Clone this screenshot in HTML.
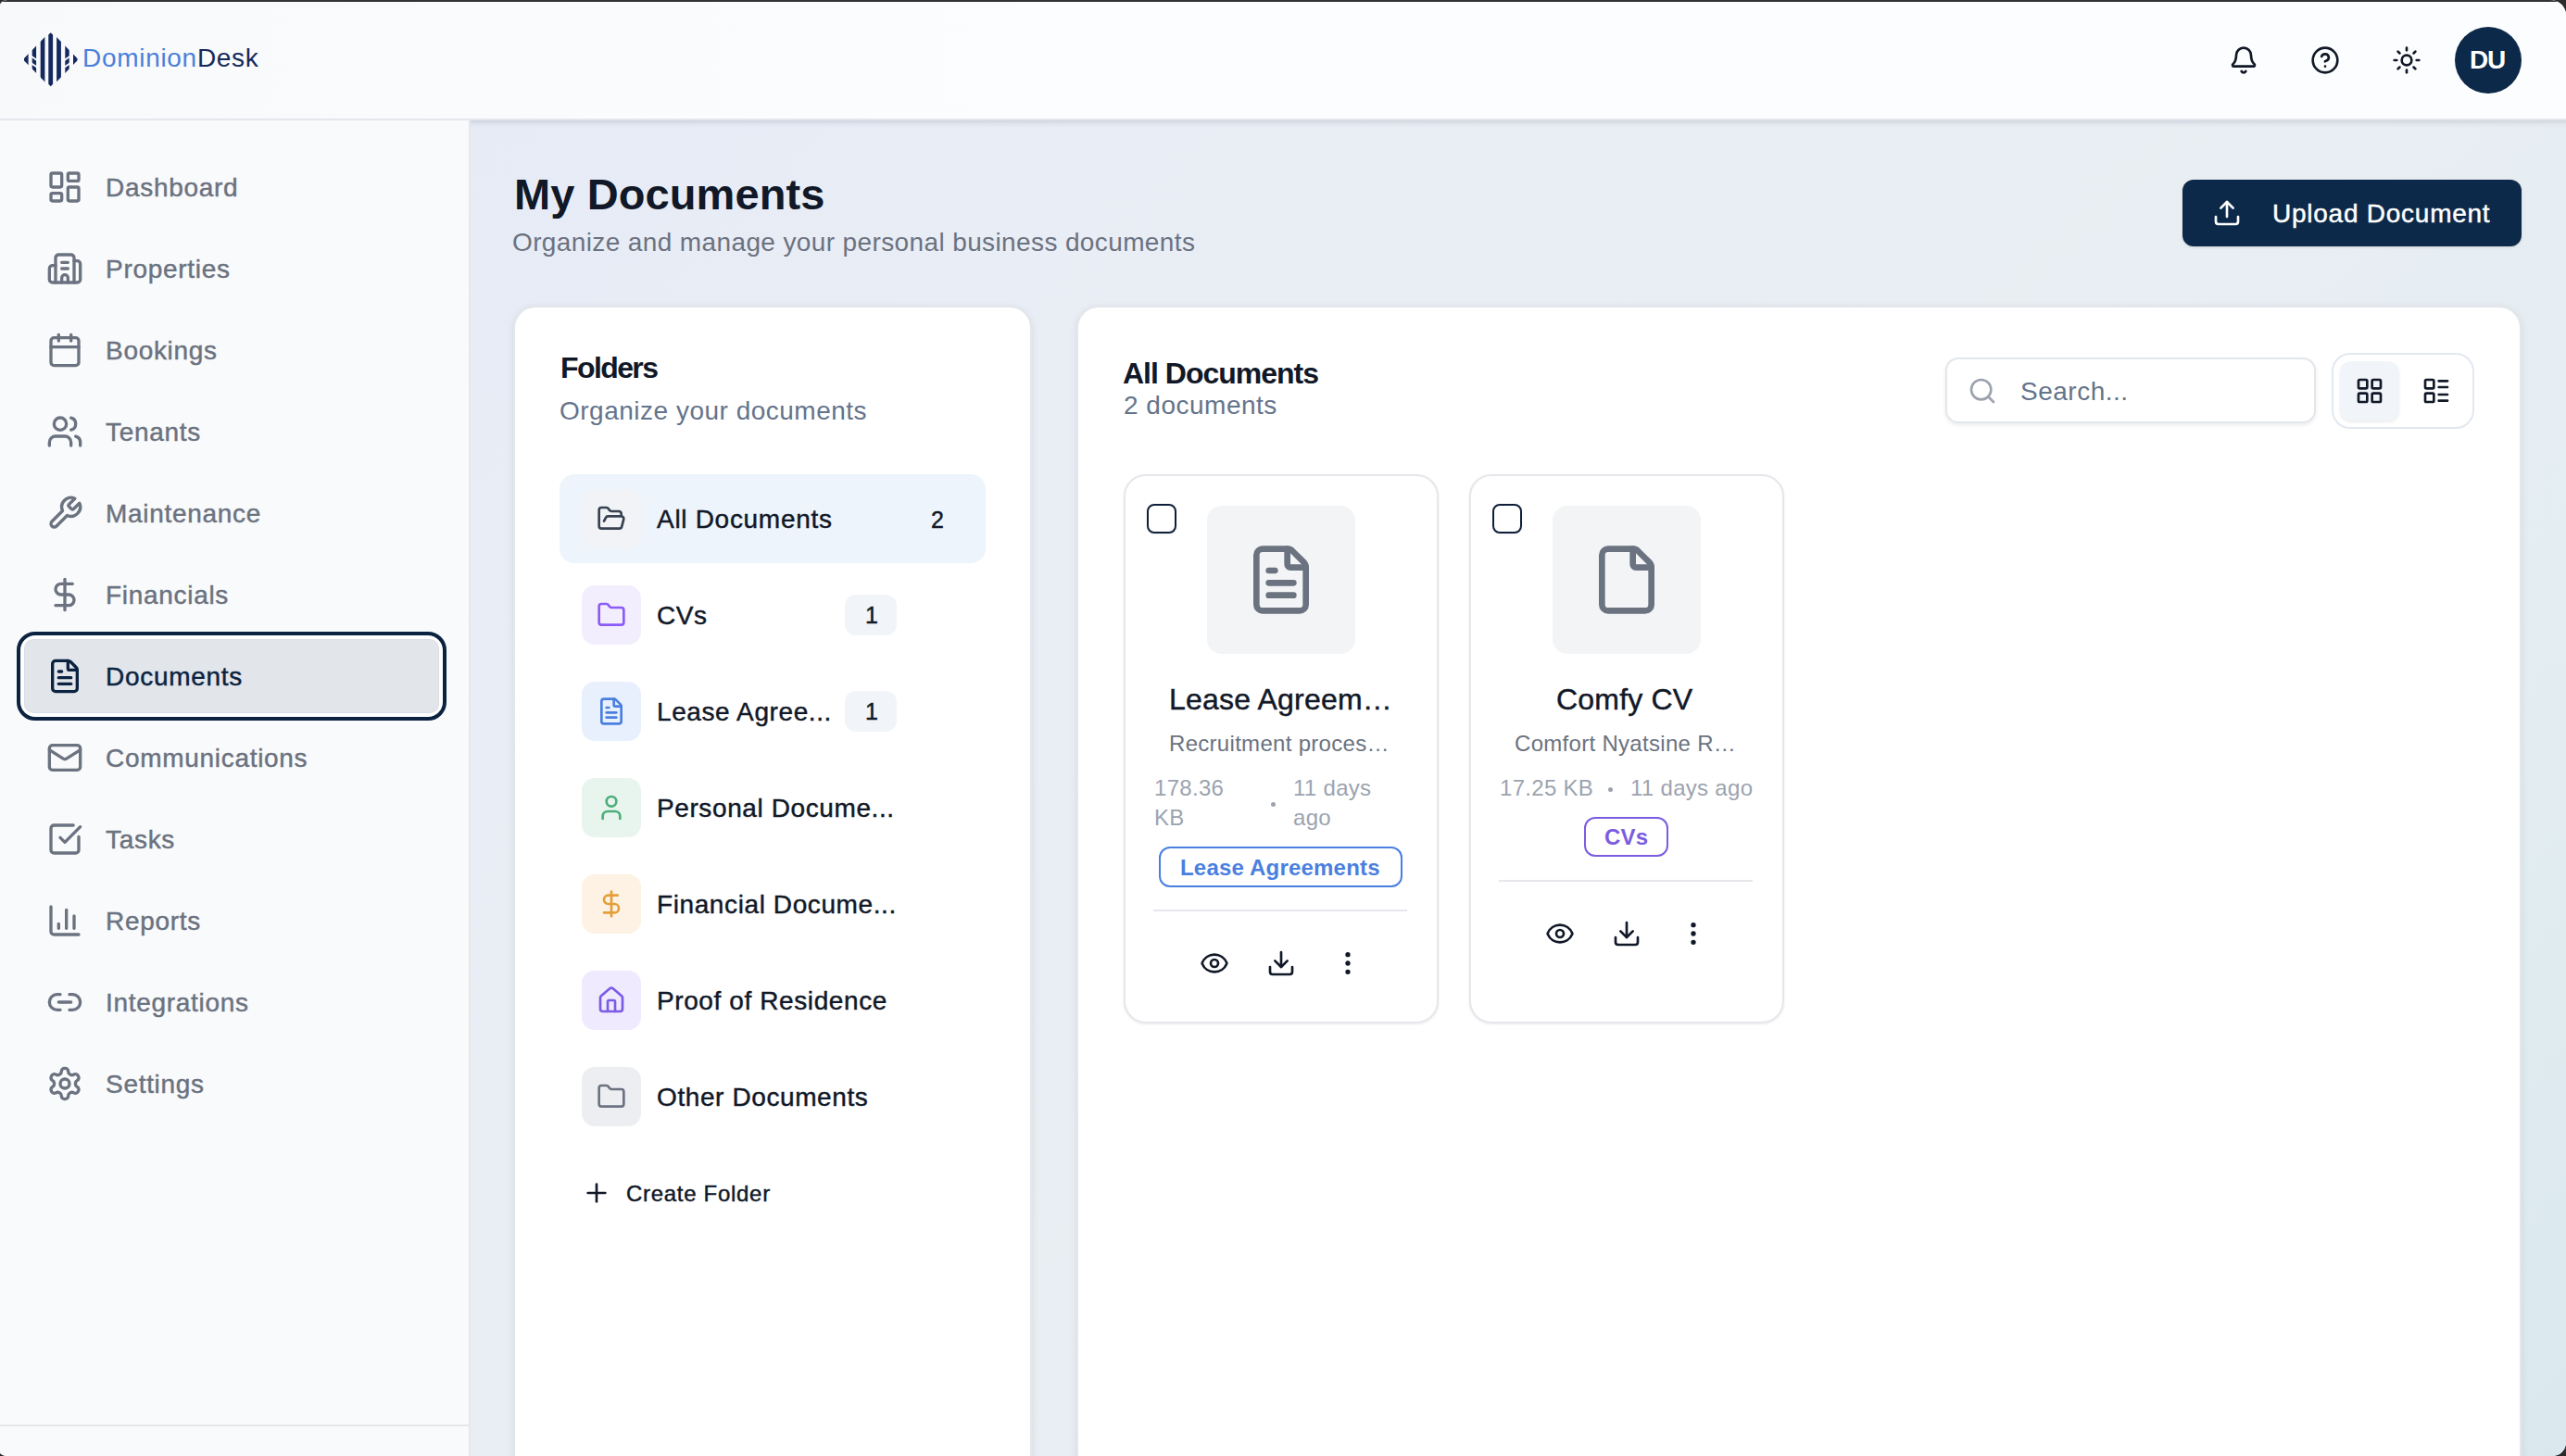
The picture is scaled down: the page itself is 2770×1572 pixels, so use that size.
<!DOCTYPE html>
<html><head><meta charset="utf-8">
<style>
*{box-sizing:border-box;margin:0;padding:0}
html,body{width:2770px;height:1572px;overflow:hidden;background:#2c2c2c;font-family:"Liberation Sans",sans-serif}
.app{position:absolute;left:0;top:0;width:2770px;height:1572px;border-radius:8px 17px 14px 8px / 6px 16px 15px 4px;overflow:hidden;background:#f9fafb}
.ab{position:absolute;display:block}
.t{position:absolute;white-space:nowrap}
</style></head><body><div class="app">
<div class="ab" style="left:0px;top:0px;width:2770px;height:130px;background:linear-gradient(90deg,#f8f9fb 0%,#fafbfc 20%,#fcfdfe 40%,#fcfdfe 100%);border-bottom:2px solid #e3e6eb"></div>
<svg class="ab" style="left:0;top:0" width="100" height="128" viewBox="0 0 100 128">
<defs><clipPath id="dm"><polygon points="54.7,33.6 24.8,64.2 54.7,94.8 84.6,64.2"/></clipPath></defs>
<g clip-path="url(#dm)" fill="#15295e">
<rect x="26" y="30" width="4.6" height="70"/>
<rect x="34.7" y="30" width="4.4" height="70"/>
<rect x="43.7" y="30" width="4.7" height="70"/>
<polygon points="52.3,37.6 54.7,35.2 57.1,37.6 57.1,90.8 54.7,93.2 52.3,90.8"/>
<rect x="61.1" y="30" width="4.8" height="70"/>
<rect x="70.3" y="30" width="4.4" height="70"/>
<rect x="79" y="30" width="4.6" height="70"/>
</g>
<g stroke="#fcfcfd" stroke-width="1.9">
<line x1="33" y1="60.2" x2="41" y2="65.8"/><line x1="33" y1="67.7" x2="41" y2="73.3"/>
<line x1="76.4" y1="60.2" x2="68.4" y2="65.8"/><line x1="76.4" y1="67.7" x2="68.4" y2="73.3"/>
</g></svg>
<div class="t" style="left:89px;top:49.30px;font-size:28px;line-height:28px;color:#4b80da;letter-spacing:0.7px;"><span style="color:#4b80da">Dominion</span><span style="color:#15295a">Desk</span></div>
<svg class="ab" style="left:2406px;top:49px" width="32" height="32" viewBox="0 0 24 24" fill="none" stroke="#111827" stroke-width="2" stroke-linecap="round" stroke-linejoin="round"><path d="M10.268 21a2 2 0 0 0 3.464 0"/><path d="M3.262 15.326A1 1 0 0 0 4 17h16a1 1 0 0 0 .74-1.673C19.41 13.956 18 12.499 18 8A6 6 0 0 0 6 8c0 4.499-1.411 5.956-2.738 7.326"/></svg>
<svg class="ab" style="left:2494px;top:49px" width="32" height="32" viewBox="0 0 24 24" fill="none" stroke="#111827" stroke-width="2" stroke-linecap="round" stroke-linejoin="round"><circle cx="12" cy="12" r="10"/><path d="M9.09 9a3 3 0 0 1 5.83 1c0 2-3 3-3 3"/><path d="M12 17h.01"/></svg>
<svg class="ab" style="left:2582px;top:49px" width="32" height="32" viewBox="0 0 24 24" fill="none" stroke="#111827" stroke-width="2" stroke-linecap="round" stroke-linejoin="round"><circle cx="12" cy="12" r="4"/><path d="M12 2v2"/><path d="M12 20v2"/><path d="m4.93 4.93 1.41 1.41"/><path d="m17.66 17.66 1.41 1.41"/><path d="M2 12h2"/><path d="M20 12h2"/><path d="m6.34 17.66-1.41 1.41"/><path d="m19.07 4.93-1.41 1.41"/></svg>
<div class="ab" style="left:2650px;top:29px;width:72px;height:72px;border-radius:50%;background:#0d2949"></div>
<div class="t" style="left:2666px;top:50.80px;font-size:28px;line-height:28px;color:#fff;font-weight:700;letter-spacing:-1.2px;">DU</div>
<div class="ab" style="left:0px;top:130px;width:508px;height:1442px;background:#f9fafb;border-right:2px solid #e5e7eb"></div>
<div class="ab" style="left:0px;top:1538px;width:506px;height:2px;background:#e5e7eb"></div>
<svg class="ab" style="left:50px;top:182px" width="40" height="40" viewBox="0 0 24 24" fill="none" stroke="#6b7280" stroke-width="2" stroke-linecap="round" stroke-linejoin="round"><rect width="7" height="9" x="3" y="3" rx="1"/><rect width="7" height="5" x="14" y="3" rx="1"/><rect width="7" height="9" x="14" y="12" rx="1"/><rect width="7" height="5" x="3" y="16" rx="1"/></svg>
<div class="t" style="left:114px;top:189.30px;font-size:28px;line-height:28px;color:#6b7280;letter-spacing:0.7px;-webkit-text-stroke:0.45px #6b7280;">Dashboard</div>
<svg class="ab" style="left:50px;top:270px" width="40" height="40" viewBox="0 0 24 24" fill="none" stroke="#6b7280" stroke-width="2" stroke-linecap="round" stroke-linejoin="round"><path d="M10 12h4"/><path d="M10 8h4"/><path d="M14 21v-3a2 2 0 0 0-4 0v3"/><path d="M6 10H4a2 2 0 0 0-2 2v7a2 2 0 0 0 2 2h16a2 2 0 0 0 2-2V9a2 2 0 0 0-2-2h-2"/><path d="M6 21V5a2 2 0 0 1 2-2h8a2 2 0 0 1 2 2v16"/></svg>
<div class="t" style="left:114px;top:277.30px;font-size:28px;line-height:28px;color:#6b7280;letter-spacing:0.7px;-webkit-text-stroke:0.45px #6b7280;">Properties</div>
<svg class="ab" style="left:50px;top:358px" width="40" height="40" viewBox="0 0 24 24" fill="none" stroke="#6b7280" stroke-width="2" stroke-linecap="round" stroke-linejoin="round"><path d="M8 2v4"/><path d="M16 2v4"/><rect width="18" height="18" x="3" y="4" rx="2"/><path d="M3 10h18"/></svg>
<div class="t" style="left:114px;top:365.30px;font-size:28px;line-height:28px;color:#6b7280;letter-spacing:0.7px;-webkit-text-stroke:0.45px #6b7280;">Bookings</div>
<svg class="ab" style="left:50px;top:446px" width="40" height="40" viewBox="0 0 24 24" fill="none" stroke="#6b7280" stroke-width="2" stroke-linecap="round" stroke-linejoin="round"><path d="M16 21v-2a4 4 0 0 0-4-4H6a4 4 0 0 0-4 4v2"/><circle cx="9" cy="7" r="4"/><path d="M22 21v-2a4 4 0 0 0-3-3.87"/><path d="M16 3.13a4 4 0 0 1 0 7.75"/></svg>
<div class="t" style="left:114px;top:453.30px;font-size:28px;line-height:28px;color:#6b7280;letter-spacing:0.7px;-webkit-text-stroke:0.45px #6b7280;">Tenants</div>
<svg class="ab" style="left:50px;top:534px" width="40" height="40" viewBox="0 0 24 24" fill="none" stroke="#6b7280" stroke-width="2" stroke-linecap="round" stroke-linejoin="round"><path d="M14.7 6.3a1 1 0 0 0 0 1.4l1.6 1.6a1 1 0 0 0 1.4 0l3.77-3.77a6 6 0 0 1-7.94 7.94l-6.91 6.91a2.12 2.12 0 0 1-3-3l6.91-6.91a6 6 0 0 1 7.94-7.94l-3.76 3.76z"/></svg>
<div class="t" style="left:114px;top:541.30px;font-size:28px;line-height:28px;color:#6b7280;letter-spacing:0.7px;-webkit-text-stroke:0.45px #6b7280;">Maintenance</div>
<svg class="ab" style="left:50px;top:622px" width="40" height="40" viewBox="0 0 24 24" fill="none" stroke="#6b7280" stroke-width="2" stroke-linecap="round" stroke-linejoin="round"><line x1="12" x2="12" y1="2" y2="22"/><path d="M17 5H9.5a3.5 3.5 0 0 0 0 7h5a3.5 3.5 0 0 1 0 7H6"/></svg>
<div class="t" style="left:114px;top:629.30px;font-size:28px;line-height:28px;color:#6b7280;letter-spacing:0.7px;-webkit-text-stroke:0.45px #6b7280;">Financials</div>
<div class="ab" style="left:18px;top:682px;width:464px;height:96px;border:4px solid #0b2340;border-radius:20px;background:#fff"></div>
<div class="ab" style="left:26px;top:690px;width:448px;height:80px;border-radius:10px;background:#e2e6eb;box-shadow:inset 0 0 0 1px rgba(0,0,0,.03)"></div>
<svg class="ab" style="left:50px;top:710px" width="40" height="40" viewBox="0 0 24 24" fill="none" stroke="#0b2340" stroke-width="2" stroke-linecap="round" stroke-linejoin="round"><path d="M6 22a2 2 0 0 1-2-2V4a2 2 0 0 1 2-2h8a2.4 2.4 0 0 1 1.704.706l3.588 3.588A2.4 2.4 0 0 1 20 8v12a2 2 0 0 1-2 2z"/><path d="M14 2v5a1 1 0 0 0 1 1h5"/><path d="M10 9H8"/><path d="M16 13H8"/><path d="M16 17H8"/></svg>
<div class="t" style="left:114px;top:717.30px;font-size:28px;line-height:28px;color:#0b2340;letter-spacing:0.7px;-webkit-text-stroke:0.45px #0b2340;">Documents</div>
<svg class="ab" style="left:50px;top:798px" width="40" height="40" viewBox="0 0 24 24" fill="none" stroke="#6b7280" stroke-width="2" stroke-linecap="round" stroke-linejoin="round"><rect width="20" height="16" x="2" y="4" rx="2"/><path d="m22 7-8.97 5.7a1.94 1.94 0 0 1-2.06 0L2 7"/></svg>
<div class="t" style="left:114px;top:805.30px;font-size:28px;line-height:28px;color:#6b7280;letter-spacing:0.7px;-webkit-text-stroke:0.45px #6b7280;">Communications</div>
<svg class="ab" style="left:50px;top:886px" width="40" height="40" viewBox="0 0 24 24" fill="none" stroke="#6b7280" stroke-width="2" stroke-linecap="round" stroke-linejoin="round"><path d="M21 10.5V19a2 2 0 0 1-2 2H5a2 2 0 0 1-2-2V5a2 2 0 0 1 2-2h12.5"/><path d="m9 11 3 3L22 4"/></svg>
<div class="t" style="left:114px;top:893.30px;font-size:28px;line-height:28px;color:#6b7280;letter-spacing:0.7px;-webkit-text-stroke:0.45px #6b7280;">Tasks</div>
<svg class="ab" style="left:50px;top:974px" width="40" height="40" viewBox="0 0 24 24" fill="none" stroke="#6b7280" stroke-width="2" stroke-linecap="round" stroke-linejoin="round"><path d="M3 3v16a2 2 0 0 0 2 2h16"/><path d="M18 17V9"/><path d="M13 17V5"/><path d="M8 17v-3"/></svg>
<div class="t" style="left:114px;top:981.30px;font-size:28px;line-height:28px;color:#6b7280;letter-spacing:0.7px;-webkit-text-stroke:0.45px #6b7280;">Reports</div>
<svg class="ab" style="left:50px;top:1062px" width="40" height="40" viewBox="0 0 24 24" fill="none" stroke="#6b7280" stroke-width="2" stroke-linecap="round" stroke-linejoin="round"><path d="M9 17H7A5 5 0 0 1 7 7h2"/><path d="M15 7h2a5 5 0 1 1 0 10h-2"/><line x1="8" x2="16" y1="12" y2="12"/></svg>
<div class="t" style="left:114px;top:1069.30px;font-size:28px;line-height:28px;color:#6b7280;letter-spacing:0.7px;-webkit-text-stroke:0.45px #6b7280;">Integrations</div>
<svg class="ab" style="left:50px;top:1150px" width="40" height="40" viewBox="0 0 24 24" fill="none" stroke="#6b7280" stroke-width="2" stroke-linecap="round" stroke-linejoin="round"><path d="M12.22 2h-.44a2 2 0 0 0-2 2v.18a2 2 0 0 1-1 1.73l-.43.25a2 2 0 0 1-2 0l-.15-.08a2 2 0 0 0-2.73.73l-.22.38a2 2 0 0 0 .73 2.73l.15.1a2 2 0 0 1 1 1.72v.51a2 2 0 0 1-1 1.74l-.15.09a2 2 0 0 0-.73 2.73l.22.38a2 2 0 0 0 2.73.73l.15-.08a2 2 0 0 1 2 0l.43.25a2 2 0 0 1 1 1.73V20a2 2 0 0 0 2 2h.44a2 2 0 0 0 2-2v-.18a2 2 0 0 1 1-1.73l.43-.25a2 2 0 0 1 2 0l.15.08a2 2 0 0 0 2.73-.73l.22-.39a2 2 0 0 0-.73-2.73l-.15-.08a2 2 0 0 1-1-1.74v-.5a2 2 0 0 1 1-1.74l.15-.09a2 2 0 0 0 .73-2.73l-.22-.38a2 2 0 0 0-2.73-.73l-.15.08a2 2 0 0 1-2 0l-.43-.25a2 2 0 0 1-1-1.73V4a2 2 0 0 0-2-2z"/><circle cx="12" cy="12" r="3"/></svg>
<div class="t" style="left:114px;top:1157.30px;font-size:28px;line-height:28px;color:#6b7280;letter-spacing:0.7px;-webkit-text-stroke:0.45px #6b7280;">Settings</div>
<div class="ab" style="left:508px;top:130px;width:2262px;height:1442px;background:linear-gradient(135deg,#e7ebf6 0%,#e9edf5 20%,#e9eef3 50%,#e3edf1 78%,#dae8ee 100%)"></div>
<div class="ab" style="left:508px;top:130px;width:2262px;height:8px;background:linear-gradient(rgba(40,50,80,.13),rgba(40,50,80,.04) 50%,rgba(40,50,80,0))"></div>
<div class="t" style="left:555px;top:186.21px;font-size:47px;line-height:47px;color:#111827;font-weight:700;letter-spacing:0.1px;">My Documents</div>
<div class="t" style="left:553px;top:248.30px;font-size:28px;line-height:28px;color:#6b7280;letter-spacing:0.38px;">Organize and manage your personal business documents</div>
<div class="ab" style="left:2356px;top:194px;width:366px;height:72px;background:#0d2949;border-radius:12px;box-shadow:0 1px 3px rgba(0,0,0,.12)"></div>
<svg class="ab" style="left:2388px;top:214px" width="32" height="32" viewBox="0 0 24 24" fill="none" stroke="#fff" stroke-width="2" stroke-linecap="round" stroke-linejoin="round"><path d="M21 15v4a2 2 0 0 1-2 2H5a2 2 0 0 1-2-2v-4"/><polyline points="17 8 12 3 7 8"/><line x1="12" x2="12" y1="3" y2="15"/></svg>
<div class="t" style="left:2453px;top:217.30px;font-size:28px;line-height:28px;color:#fff;letter-spacing:0.75px;-webkit-text-stroke:0.45px #fff;">Upload Document</div>
<div class="ab" style="left:554px;top:330px;width:560px;height:1310px;background:#fff;border:2px solid #e3e6eb;border-radius:24px;box-shadow:0 2px 8px rgba(15,23,42,.08)"></div>
<div class="t" style="left:605px;top:380.91px;font-size:32px;line-height:32px;color:#111827;font-weight:700;letter-spacing:-1.6px;">Folders</div>
<div class="t" style="left:604px;top:430.30px;font-size:28px;line-height:28px;color:#64748b;letter-spacing:0.5px;">Organize your documents</div>
<div class="ab" style="left:604px;top:512px;width:460px;height:96px;background:#eef4fc;border-radius:16px"></div>
<div class="ab" style="left:628px;top:528px;width:64px;height:64px;background:#f1f3f6;border-radius:14px"></div>
<svg class="ab" style="left:644px;top:544px" width="32" height="32" viewBox="0 0 24 24" fill="none" stroke="#374151" stroke-width="2" stroke-linecap="round" stroke-linejoin="round"><path d="m6 14 1.5-2.9A2 2 0 0 1 9.24 10H20a2 2 0 0 1 1.94 2.5l-1.54 6a2 2 0 0 1-1.95 1.5H4a2 2 0 0 1-2-2V5a2 2 0 0 1 2-2h3.9a2 2 0 0 1 1.69.9l.81 1.2a2 2 0 0 0 1.67.9H18a2 2 0 0 1 2 2v2"/></svg>
<div class="t" style="left:709px;top:547.30px;font-size:28px;line-height:28px;color:#111827;letter-spacing:0.7px;-webkit-text-stroke:0.45px #111827;">All Documents</div>
<div class="t" style="left:1005px;top:548.84px;font-size:25px;line-height:25px;color:#111827;-webkit-text-stroke:0.7px #111827;-webkit-text-stroke:0.45px #111827;">2</div>
<div class="ab" style="left:628px;top:632px;width:64px;height:64px;background:#f3eefe;border-radius:14px"></div>
<svg class="ab" style="left:644px;top:648px" width="32" height="32" viewBox="0 0 24 24" fill="none" stroke="#8b5cf6" stroke-width="2" stroke-linecap="round" stroke-linejoin="round"><path d="M20 20a2 2 0 0 0 2-2V8a2 2 0 0 0-2-2h-7.9a2 2 0 0 1-1.69-.9L9.6 3.9A2 2 0 0 0 7.93 3H4a2 2 0 0 0-2 2v13a2 2 0 0 0 2 2Z"/></svg>
<div class="t" style="left:709px;top:651.30px;font-size:28px;line-height:28px;color:#111827;letter-spacing:0.6px;-webkit-text-stroke:0.45px #111827;">CVs</div>
<div class="ab" style="left:912px;top:642px;width:56px;height:44px;background:#f1f4f8;border-radius:12px"></div>
<div class="t" style="left:934px;top:651.84px;font-size:25px;line-height:25px;color:#111827;-webkit-text-stroke:0.7px #111827;-webkit-text-stroke:0.45px #111827;">1</div>
<div class="ab" style="left:628px;top:736px;width:64px;height:64px;background:#e9f0fd;border-radius:14px"></div>
<svg class="ab" style="left:644px;top:752px" width="32" height="32" viewBox="0 0 24 24" fill="none" stroke="#4a7fe0" stroke-width="2" stroke-linecap="round" stroke-linejoin="round"><path d="M6 22a2 2 0 0 1-2-2V4a2 2 0 0 1 2-2h8a2.4 2.4 0 0 1 1.704.706l3.588 3.588A2.4 2.4 0 0 1 20 8v12a2 2 0 0 1-2 2z"/><path d="M14 2v5a1 1 0 0 0 1 1h5"/><path d="M10 9H8"/><path d="M16 13H8"/><path d="M16 17H8"/></svg>
<div class="t" style="left:709px;top:755.30px;font-size:28px;line-height:28px;color:#111827;letter-spacing:0.6px;-webkit-text-stroke:0.45px #111827;">Lease Agree...</div>
<div class="ab" style="left:912px;top:746px;width:56px;height:44px;background:#f1f4f8;border-radius:12px"></div>
<div class="t" style="left:934px;top:755.84px;font-size:25px;line-height:25px;color:#111827;-webkit-text-stroke:0.7px #111827;-webkit-text-stroke:0.45px #111827;">1</div>
<div class="ab" style="left:628px;top:840px;width:64px;height:64px;background:#e8f5ee;border-radius:14px"></div>
<svg class="ab" style="left:644px;top:856px" width="32" height="32" viewBox="0 0 24 24" fill="none" stroke="#4caf7a" stroke-width="2" stroke-linecap="round" stroke-linejoin="round"><path d="M19 21v-2a4 4 0 0 0-4-4H9a4 4 0 0 0-4 4v2"/><circle cx="12" cy="7" r="4"/></svg>
<div class="t" style="left:709px;top:859.30px;font-size:28px;line-height:28px;color:#111827;letter-spacing:0.6px;-webkit-text-stroke:0.45px #111827;">Personal Docume...</div>
<div class="ab" style="left:628px;top:944px;width:64px;height:64px;background:#fdf2e4;border-radius:14px"></div>
<svg class="ab" style="left:644px;top:960px" width="32" height="32" viewBox="0 0 24 24" fill="none" stroke="#e5a03a" stroke-width="2" stroke-linecap="round" stroke-linejoin="round"><line x1="12" x2="12" y1="2" y2="22"/><path d="M17 5H9.5a3.5 3.5 0 0 0 0 7h5a3.5 3.5 0 0 1 0 7H6"/></svg>
<div class="t" style="left:709px;top:963.30px;font-size:28px;line-height:28px;color:#111827;letter-spacing:0.6px;-webkit-text-stroke:0.45px #111827;">Financial Docume...</div>
<div class="ab" style="left:628px;top:1048px;width:64px;height:64px;background:#efeafd;border-radius:14px"></div>
<svg class="ab" style="left:644px;top:1064px" width="32" height="32" viewBox="0 0 24 24" fill="none" stroke="#7c5ce6" stroke-width="2" stroke-linecap="round" stroke-linejoin="round"><path d="M15 21v-8a1 1 0 0 0-1-1h-4a1 1 0 0 0-1 1v8"/><path d="M3 10a2 2 0 0 1 .709-1.528l7-5.999a2 2 0 0 1 2.582 0l7 5.999A2 2 0 0 1 21 10v9a2 2 0 0 1-2 2H5a2 2 0 0 1-2-2z"/></svg>
<div class="t" style="left:709px;top:1067.30px;font-size:28px;line-height:28px;color:#111827;letter-spacing:0.6px;-webkit-text-stroke:0.45px #111827;">Proof of Residence</div>
<div class="ab" style="left:628px;top:1152px;width:64px;height:64px;background:#eceef1;border-radius:14px"></div>
<svg class="ab" style="left:644px;top:1168px" width="32" height="32" viewBox="0 0 24 24" fill="none" stroke="#6b7280" stroke-width="2" stroke-linecap="round" stroke-linejoin="round"><path d="M20 20a2 2 0 0 0 2-2V8a2 2 0 0 0-2-2h-7.9a2 2 0 0 1-1.69-.9L9.6 3.9A2 2 0 0 0 7.93 3H4a2 2 0 0 0-2 2v13a2 2 0 0 0 2 2Z"/></svg>
<div class="t" style="left:709px;top:1171.30px;font-size:28px;line-height:28px;color:#111827;letter-spacing:0.6px;-webkit-text-stroke:0.45px #111827;">Other Documents</div>
<svg class="ab" style="left:628px;top:1272px" width="32" height="32" viewBox="0 0 24 24" fill="none" stroke="#111827" stroke-width="2" stroke-linecap="round" stroke-linejoin="round"><path d="M5 12h14"/><path d="M12 5v14"/></svg>
<div class="t" style="left:676px;top:1276.68px;font-size:24px;line-height:24px;color:#111827;letter-spacing:0.7px;-webkit-text-stroke:0.45px #111827;">Create Folder</div>
<div class="ab" style="left:1162px;top:330px;width:1560px;height:1310px;background:#fff;border:2px solid #e3e6eb;border-radius:24px;box-shadow:0 2px 8px rgba(15,23,42,.08)"></div>
<div class="t" style="left:1212px;top:386.91px;font-size:32px;line-height:32px;color:#111827;font-weight:700;letter-spacing:-1.0px;">All Documents</div>
<div class="t" style="left:1213px;top:424.30px;font-size:28px;line-height:28px;color:#64748b;letter-spacing:0.5px;">2 documents</div>
<div class="ab" style="left:2100px;top:386px;width:400px;height:71px;background:#fff;border:2px solid #e3e6eb;border-radius:14px;box-shadow:0 2px 4px rgba(15,23,42,.08)"></div>
<svg class="ab" style="left:2124px;top:406px" width="32" height="32" viewBox="0 0 24 24" fill="none" stroke="#9ca3af" stroke-width="2" stroke-linecap="round" stroke-linejoin="round"><circle cx="11" cy="11" r="8"/><path d="m21 21-4.3-4.3"/></svg>
<div class="t" style="left:2181px;top:409.30px;font-size:28px;line-height:28px;color:#64748b;letter-spacing:0.5px;">Search...</div>
<div class="ab" style="left:2517px;top:381px;width:154px;height:82px;background:#fff;border:2px solid #e2e8f0;border-radius:20px"></div>
<div class="ab" style="left:2526px;top:390px;width:64px;height:64px;background:#f1f5f9;border-radius:12px;box-shadow:0 2px 3px rgba(15,23,42,.08)"></div>
<svg class="ab" style="left:2542px;top:406px" width="32" height="32" viewBox="0 0 24 24" fill="none" stroke="#111827" stroke-width="2" stroke-linecap="round" stroke-linejoin="round"><rect width="7" height="7" x="3" y="3" rx="1"/><rect width="7" height="7" x="14" y="3" rx="1"/><rect width="7" height="7" x="14" y="14" rx="1"/><rect width="7" height="7" x="3" y="14" rx="1"/></svg>
<svg class="ab" style="left:2614px;top:406px" width="32" height="32" viewBox="0 0 24 24" fill="none" stroke="#111827" stroke-width="2" stroke-linecap="round" stroke-linejoin="round"><rect width="7" height="7" x="3" y="3" rx="1"/><rect width="7" height="7" x="3" y="14" rx="1"/><path d="M14 4h7"/><path d="M14 9h7"/><path d="M14 15h7"/><path d="M14 20h7"/></svg>
<div class="ab" style="left:1213px;top:512px;width:340px;height:593px;background:#fff;border:2px solid #e5e7eb;border-radius:24px;box-shadow:0 1px 3px rgba(15,23,42,.08)"></div>
<div class="ab" style="left:1238px;top:544px;width:32px;height:32px;border:2px solid #0f1f3a;border-radius:8px;background:#fff;box-shadow:0 1px 2px rgba(0,0,0,.08)"></div>
<div class="ab" style="left:1303px;top:546px;width:160px;height:160px;background:#f3f4f6;border-radius:16px"></div>
<svg class="ab" style="left:1343px;top:586px" width="80" height="80" viewBox="0 0 24 24" fill="none" stroke="#6b7280" stroke-width="2" stroke-linecap="round" stroke-linejoin="round"><path d="M6 22a2 2 0 0 1-2-2V4a2 2 0 0 1 2-2h8a2.4 2.4 0 0 1 1.704.706l3.588 3.588A2.4 2.4 0 0 1 20 8v12a2 2 0 0 1-2 2z"/><path d="M14 2v5a1 1 0 0 0 1 1h5"/><path d="M10 9H8"/><path d="M16 13H8"/><path d="M16 17H8"/></svg>
<div class="t" style="left:1262px;top:738.91px;font-size:32px;line-height:32px;color:#111827;letter-spacing:0.2px;-webkit-text-stroke:0.45px #111827;">Lease Agreem…</div>
<div class="t" style="left:1262px;top:790.68px;font-size:24px;line-height:24px;color:#6b7280;letter-spacing:0.3px;">Recruitment proces…</div>
<div class="t" style="left:1246px;top:838.68px;font-size:24px;line-height:24px;color:#9ca3af;letter-spacing:0.3px;">178.36</div>
<div class="t" style="left:1246px;top:870.68px;font-size:24px;line-height:24px;color:#9ca3af;letter-spacing:0.3px;">KB</div>
<div class="ab" style="left:1372px;top:866px;width:5px;height:5px;background:#9ca3af;border-radius:50%"></div>
<div class="t" style="left:1396px;top:838.68px;font-size:24px;line-height:24px;color:#9ca3af;letter-spacing:0.3px;">11 days</div>
<div class="t" style="left:1396px;top:870.68px;font-size:24px;line-height:24px;color:#9ca3af;letter-spacing:0.3px;">ago</div>
<div class="ab" style="left:1251px;top:914px;width:263px;height:44px;border:2px solid #4a7fe0;border-radius:12px"></div>
<div class="t" style="left:1274px;top:924.68px;font-size:24px;line-height:24px;color:#4a7fe0;font-weight:700;letter-spacing:0.2px;">Lease Agreements</div>
<div class="ab" style="left:1245px;top:982px;width:274px;height:2px;background:#e5e7eb"></div>
<svg class="ab" style="left:1295px;top:1024px" width="32" height="32" viewBox="0 0 24 24" fill="none" stroke="#111827" stroke-width="2" stroke-linecap="round" stroke-linejoin="round"><path d="M2.062 12.348a1 1 0 0 1 0-.696 10.75 10.75 0 0 1 19.876 0 1 1 0 0 1 0 .696 10.75 10.75 0 0 1-19.876 0"/><circle cx="12" cy="12" r="3"/></svg>
<svg class="ab" style="left:1367px;top:1024px" width="32" height="32" viewBox="0 0 24 24" fill="none" stroke="#111827" stroke-width="2" stroke-linecap="round" stroke-linejoin="round"><path d="M21 15v4a2 2 0 0 1-2 2H5a2 2 0 0 1-2-2v-4"/><polyline points="7 10 12 15 17 10"/><line x1="12" x2="12" y1="15" y2="3"/></svg>
<svg class="ab" style="left:1439px;top:1024px" width="32" height="32" viewBox="0 0 24 24" fill="none" stroke="#111827" stroke-width="2" stroke-linecap="round" stroke-linejoin="round"><circle cx="12" cy="12" r="1"/><circle cx="12" cy="5" r="1"/><circle cx="12" cy="19" r="1"/></svg>
<div class="ab" style="left:1586px;top:512px;width:340px;height:593px;background:#fff;border:2px solid #e5e7eb;border-radius:24px;box-shadow:0 1px 3px rgba(15,23,42,.08)"></div>
<div class="ab" style="left:1611px;top:544px;width:32px;height:32px;border:2px solid #0f1f3a;border-radius:8px;background:#fff;box-shadow:0 1px 2px rgba(0,0,0,.08)"></div>
<div class="ab" style="left:1676px;top:546px;width:160px;height:160px;background:#f3f4f6;border-radius:16px"></div>
<svg class="ab" style="left:1716px;top:586px" width="80" height="80" viewBox="0 0 24 24" fill="none" stroke="#6b7280" stroke-width="2" stroke-linecap="round" stroke-linejoin="round"><path d="M6 22a2 2 0 0 1-2-2V4a2 2 0 0 1 2-2h8a2.4 2.4 0 0 1 1.704.706l3.588 3.588A2.4 2.4 0 0 1 20 8v12a2 2 0 0 1-2 2z"/><path d="M14 2v5a1 1 0 0 0 1 1h5"/></svg>
<div class="t" style="left:1680px;top:738.91px;font-size:32px;line-height:32px;color:#111827;letter-spacing:0.2px;-webkit-text-stroke:0.45px #111827;">Comfy CV</div>
<div class="t" style="left:1635px;top:790.68px;font-size:24px;line-height:24px;color:#6b7280;letter-spacing:0.3px;">Comfort Nyatsine R…</div>
<div class="t" style="left:1619px;top:838.68px;font-size:24px;line-height:24px;color:#9ca3af;letter-spacing:0.3px;">17.25 KB</div>
<div class="ab" style="left:1736px;top:850px;width:5px;height:5px;background:#9ca3af;border-radius:50%"></div>
<div class="t" style="left:1760px;top:838.68px;font-size:24px;line-height:24px;color:#9ca3af;letter-spacing:0.3px;">11 days ago</div>
<div class="ab" style="left:1710px;top:882px;width:91px;height:43px;border:2px solid #7b5ce0;border-radius:12px"></div>
<div class="t" style="left:1732px;top:891.68px;font-size:24px;line-height:24px;color:#7b5ce0;font-weight:700;letter-spacing:0.2px;">CVs</div>
<div class="ab" style="left:1618px;top:950px;width:274px;height:2px;background:#e5e7eb"></div>
<svg class="ab" style="left:1668px;top:992px" width="32" height="32" viewBox="0 0 24 24" fill="none" stroke="#111827" stroke-width="2" stroke-linecap="round" stroke-linejoin="round"><path d="M2.062 12.348a1 1 0 0 1 0-.696 10.75 10.75 0 0 1 19.876 0 1 1 0 0 1 0 .696 10.75 10.75 0 0 1-19.876 0"/><circle cx="12" cy="12" r="3"/></svg>
<svg class="ab" style="left:1740px;top:992px" width="32" height="32" viewBox="0 0 24 24" fill="none" stroke="#111827" stroke-width="2" stroke-linecap="round" stroke-linejoin="round"><path d="M21 15v4a2 2 0 0 1-2 2H5a2 2 0 0 1-2-2v-4"/><polyline points="7 10 12 15 17 10"/><line x1="12" x2="12" y1="15" y2="3"/></svg>
<svg class="ab" style="left:1812px;top:992px" width="32" height="32" viewBox="0 0 24 24" fill="none" stroke="#111827" stroke-width="2" stroke-linecap="round" stroke-linejoin="round"><circle cx="12" cy="12" r="1"/><circle cx="12" cy="5" r="1"/><circle cx="12" cy="19" r="1"/></svg>
<div class="ab" style="left:0;top:0;width:2770px;height:2px;background:#333"></div>
</div></body></html>
